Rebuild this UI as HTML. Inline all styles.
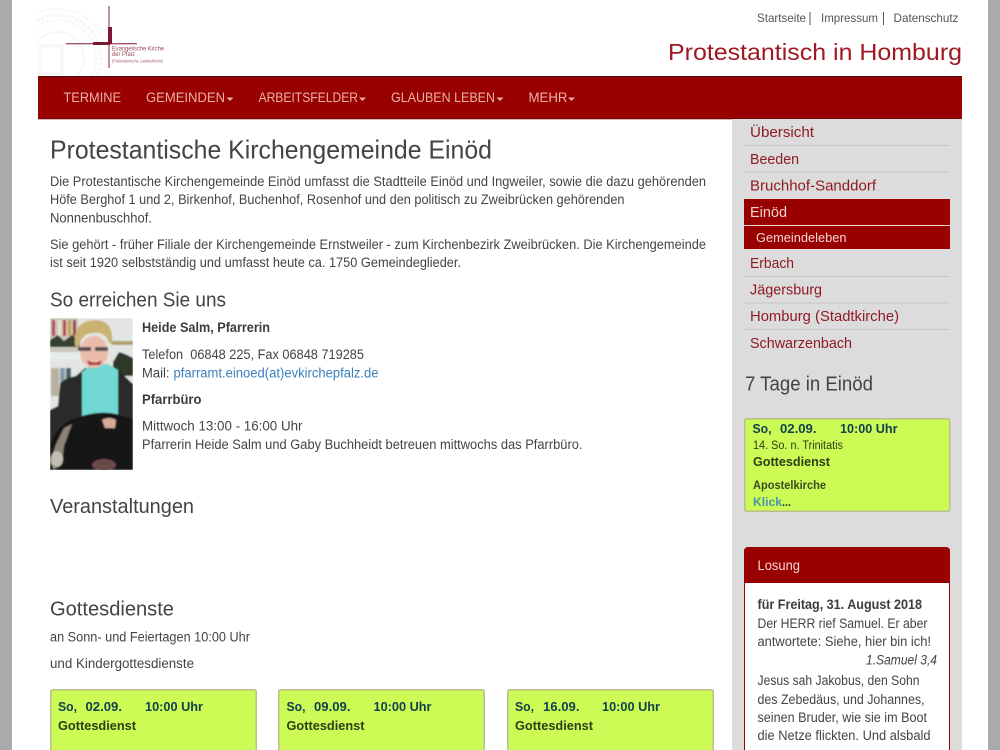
<!DOCTYPE html>
<html lang="de"><head><meta charset="utf-8"><title>Protestantische Kirchengemeinde Einöd</title>
<style>
html,body{margin:0;padding:0;width:1000px;height:750px;overflow:hidden;background:#aaa}
svg{display:block;position:absolute;left:0;top:0}
text{font-family:"Liberation Sans",sans-serif;fill:#444;font-size:13.5px}
.b{font-weight:bold;fill:#3c3c3c}
.side{fill:#8f1a24;font-size:15px}
.nav{fill:#ecb0a6;font-size:13.5px}
.top{fill:#555;font-size:12px}
.h2{font-size:20px}
.t{fill:#12404c;font-weight:bold;font-size:13px}
.g{fill:#2f3d18;font-weight:bold;font-size:13px}
</style></head><body>
<svg width="1000" height="750" viewBox="0 0 1000 750" xmlns="http://www.w3.org/2000/svg">
<defs>
<filter id="bl" x="-5%" y="-5%" width="110%" height="110%"><feGaussianBlur stdDeviation="0.7"/></filter>
<filter id="bs" x="-5%" y="-5%" width="110%" height="110%"><feGaussianBlur stdDeviation="0.35"/></filter>
<filter id="bt" x="-5%" y="-5%" width="110%" height="110%"><feGaussianBlur stdDeviation="0.3"/></filter>
<clipPath id="pc"><rect x="50" y="318" width="83" height="152"/></clipPath>
<clipPath id="sc"><rect x="36" y="8" width="80" height="68"/></clipPath>
</defs>
<rect x="12" y="0" width="976" height="750" fill="#fff"/>
<!-- logo -->
<g clip-path="url(#sc)" fill="none" stroke="#f7f7f7" filter="url(#bs)">
<circle cx="58" cy="58" r="49" stroke-width="1.500"/><circle cx="58" cy="58" r="38" stroke-width="1.500"/><circle cx="58" cy="58" r="43" stroke-width="4" stroke-dasharray="3 2"/><circle cx="58" cy="58" r="26" stroke-width="2"/><rect x="40" y="46" width="22" height="28" stroke-width="3"/>
</g>
<g filter="url(#bs)">
<rect x="108.400" y="6" width="1.200" height="62" fill="#a14a5c"/>
<rect x="66" y="43.200" width="71" height="1.100" fill="#8e2a40"/>
<rect x="108" y="27" width="4" height="17" fill="#7c1630"/>
<rect x="93" y="42" width="17" height="3" fill="#7c1630"/>
</g>
<g filter="url(#bt)">
<text x="112" y="50.500" textLength="52" lengthAdjust="spacingAndGlyphs" style="font-size:6.500px;fill:#9c4a5a">Evangelische Kirche</text>
<text x="112" y="55.800" textLength="23" lengthAdjust="spacingAndGlyphs" style="font-size:6.500px;fill:#9c4a5a">der Pfalz</text>
<text x="112" y="62.500" textLength="51" lengthAdjust="spacingAndGlyphs" style="font-size:4.500px;fill:#a5606c">(Protestantische Landeskirche)</text>
</g>
<!-- top links -->
<text class="top" x="757" y="22" textLength="49" lengthAdjust="spacingAndGlyphs">Startseite</text>
<rect x="809.500" y="12" width="1" height="13" fill="#555"/>
<text class="top" x="821" y="22" textLength="57" lengthAdjust="spacingAndGlyphs">Impressum</text>
<rect x="883" y="12" width="1" height="13" fill="#555"/>
<text class="top" x="893.500" y="22" textLength="65" lengthAdjust="spacingAndGlyphs">Datenschutz</text>
<text x="668" y="60" textLength="294" lengthAdjust="spacingAndGlyphs" style="font-size:23px;fill:#a01822">Protestantisch in Homburg</text>
<!-- nav -->
<rect x="38" y="76" width="924" height="43" fill="#990000"/>
<rect x="38" y="76" width="924" height="1" fill="#4d0a0a"/>
<rect x="38" y="118.500" width="924" height="0.800" fill="#5a0a0a"/>
<text class="nav" x="63.500" y="102" textLength="57.500" lengthAdjust="spacingAndGlyphs">TERMINE</text>
<text class="nav" x="146" y="102" textLength="79" lengthAdjust="spacingAndGlyphs">GEMEINDEN</text>
<path d="M226.500 97.500h7l-3.500 3.500z" fill="#ecb0a6"/>
<text class="nav" x="258.500" y="102" textLength="99.500" lengthAdjust="spacingAndGlyphs">ARBEITSFELDER</text>
<path d="M359 97.500h7l-3.500 3.500z" fill="#ecb0a6"/>
<text class="nav" x="391" y="102" textLength="104" lengthAdjust="spacingAndGlyphs">GLAUBEN LEBEN</text>
<path d="M496.500 97.500h7l-3.500 3.500z" fill="#ecb0a6"/>
<text class="nav" x="528.500" y="102" textLength="39" lengthAdjust="spacingAndGlyphs">MEHR</text>
<path d="M568 97.500h7l-3.500 3.500z" fill="#ecb0a6"/>
<!-- main -->
<text x="50" y="158.500" textLength="442" lengthAdjust="spacingAndGlyphs" style="font-size:26px">Protestantische Kirchengemeinde Einöd</text>
<text x="50" y="186" textLength="656" lengthAdjust="spacingAndGlyphs">Die Protestantische Kirchengemeinde Einöd umfasst die Stadtteile Einöd und Ingweiler, sowie die dazu gehörenden</text>
<text x="50" y="204" textLength="574.500" lengthAdjust="spacingAndGlyphs">Höfe Berghof 1 und 2, Birkenhof, Buchenhof, Rosenhof und den politisch zu Zweibrücken gehörenden</text>
<text x="50" y="222.500" textLength="102" lengthAdjust="spacingAndGlyphs">Nonnenbuschhof.</text>
<text x="50" y="249" textLength="656" lengthAdjust="spacingAndGlyphs">Sie gehört - früher Filiale der Kirchengemeinde Ernstweiler - zum Kirchenbezirk Zweibrücken. Die Kirchengemeinde</text>
<text x="50" y="267" textLength="411" lengthAdjust="spacingAndGlyphs">ist seit 1920 selbstständig und umfasst heute ca. 1750 Gemeindeglieder.</text>
<text class="h2" x="50" y="306.500" textLength="176" lengthAdjust="spacingAndGlyphs">So erreichen Sie uns</text>
<!-- photo -->
<g clip-path="url(#pc)"><g filter="url(#bl)">
<rect x="50" y="318" width="83" height="152" fill="#e2e5e2"/>
<rect x="50" y="318" width="28" height="34" fill="#c9c6ba"/>
<rect x="52" y="320" width="3" height="16" fill="#b8474a"/><rect x="58" y="320" width="3" height="16" fill="#e8e0d0"/><rect x="63" y="320" width="3" height="16" fill="#b8474a"/><rect x="68" y="320" width="3" height="16" fill="#c8a040"/><rect x="73" y="320" width="3" height="16" fill="#a03a4a"/>
<path d="M50 340l8-5 6 6 8-6 8 6v6H50z" fill="#36402e"/>
<rect x="50" y="352" width="30" height="8" fill="#e6ece8"/>
<rect x="51" y="368" width="8" height="28" fill="#b8b0a0"/><rect x="60" y="368" width="5" height="26" fill="#7f9aa8"/><rect x="66" y="368" width="5" height="14" fill="#48606a"/>
<rect x="112" y="341" width="21" height="4" fill="#aea068"/>
<path d="M113 362l6-10 6 2 8 4v18h-20z" fill="#2e3828"/>
<path d="M50 470V410l8-4 2-22q4-6 16-8l9-8 33 2 15 14v86z" fill="#2a2a2a"/>
<path d="M82 372l10-8 16 0 10 6v52H82z" fill="#72d8d4"/>
<ellipse cx="94" cy="352" rx="14" ry="16" fill="#ecbcab"/>
<path d="M75 346q-3-25 20-26 19 0 17 24l-3-1q-3-11-15-10-13 0-15 14z" fill="#c9b272"/>
<path d="M78 347h13v4H78zM95 347h13v4H95z" fill="#5c5050"/>
<path d="M87 360q8 5 15 0l-2 5h-11z" fill="#a8323f"/>
<path d="M50 470V445q8-22 26-27 22-8 40-4l17 5v51z" fill="#121212"/>
<path d="M102 420q7-4 14 0l-1 8h-10z" fill="#d8a898"/>
<path d="M50 462l6-18 8-16 8-4-8 22-2 16-8 8z" fill="#8c8474"/>
<ellipse cx="57" cy="459" rx="6" ry="8" fill="#c0beb2"/>
<ellipse cx="104" cy="465" rx="12" ry="6" fill="#6a4a4a"/>
</g></g>
<text class="b" x="142" y="332" textLength="128" lengthAdjust="spacingAndGlyphs">Heide Salm, Pfarrerin</text>
<text x="142" y="359" textLength="222" lengthAdjust="spacingAndGlyphs" xml:space="preserve">Telefon  06848 225, Fax 06848 719285</text>
<text x="142" y="377.500" textLength="27.500" lengthAdjust="spacingAndGlyphs">Mail:</text>
<text x="173.500" y="377.500" textLength="205" lengthAdjust="spacingAndGlyphs" style="fill:#3b7fbd">pfarramt.einoed(at)evkirchepfalz.de</text>
<text class="b" x="142" y="404" textLength="59.500" lengthAdjust="spacingAndGlyphs">Pfarrbüro</text>
<text x="142" y="430.500" textLength="160.500" lengthAdjust="spacingAndGlyphs">Mittwoch 13:00 - 16:00 Uhr</text>
<text x="142" y="449" textLength="440.500" lengthAdjust="spacingAndGlyphs">Pfarrerin Heide Salm und Gaby Buchheidt betreuen mittwochs das Pfarrbüro.</text>
<text class="h2" x="50" y="513" textLength="144" lengthAdjust="spacingAndGlyphs">Veranstaltungen</text>
<text class="h2" x="50" y="615.500" textLength="124" lengthAdjust="spacingAndGlyphs">Gottesdienste</text>
<text x="50" y="641.500" textLength="200" lengthAdjust="spacingAndGlyphs">an Sonn- und Feiertagen 10:00 Uhr</text>
<text x="50" y="668" textLength="144" lengthAdjust="spacingAndGlyphs">und Kindergottesdienste</text>
<!-- cards -->
<rect x="50.750" y="689.750" width="205.500" height="80" rx="2" fill="#ccfb55" stroke="#bdbd90" stroke-width="1.500"/>
<rect x="278.750" y="689.750" width="205.500" height="80" rx="2" fill="#ccfb55" stroke="#bdbd90" stroke-width="1.500"/>
<rect x="507.750" y="689.750" width="205.500" height="80" rx="2" fill="#ccfb55" stroke="#bdbd90" stroke-width="1.500"/>
<text class="t" x="58" y="711" textLength="19" lengthAdjust="spacingAndGlyphs">So,</text><text class="t" x="85.500" y="711" textLength="36.500" lengthAdjust="spacingAndGlyphs">02.09.</text><text class="t" x="145" y="711" textLength="58" lengthAdjust="spacingAndGlyphs">10:00 Uhr</text>
<text class="g" x="58" y="730" textLength="78" lengthAdjust="spacingAndGlyphs">Gottesdienst</text>
<text class="t" x="286.500" y="711" textLength="19" lengthAdjust="spacingAndGlyphs">So,</text><text class="t" x="314" y="711" textLength="36.500" lengthAdjust="spacingAndGlyphs">09.09.</text><text class="t" x="373.500" y="711" textLength="58" lengthAdjust="spacingAndGlyphs">10:00 Uhr</text>
<text class="g" x="286.500" y="730" textLength="78" lengthAdjust="spacingAndGlyphs">Gottesdienst</text>
<text class="t" x="515" y="711" textLength="19" lengthAdjust="spacingAndGlyphs">So,</text><text class="t" x="543" y="711" textLength="36.500" lengthAdjust="spacingAndGlyphs">16.09.</text><text class="t" x="602" y="711" textLength="58" lengthAdjust="spacingAndGlyphs">10:00 Uhr</text>
<text class="g" x="515" y="730" textLength="78" lengthAdjust="spacingAndGlyphs">Gottesdienst</text>
<!-- sidebar -->
<rect x="732" y="119" width="230" height="631" fill="#dcdcdc"/>
<g fill="#c6c6c6"><rect x="744" y="145" width="206" height="1"/><rect x="744" y="171.500" width="206" height="1"/><rect x="744" y="276" width="206" height="1"/><rect x="744" y="302.500" width="206" height="1"/><rect x="744" y="329" width="206" height="1"/></g>
<rect x="744" y="199" width="206" height="50" fill="#990000"/>
<rect x="744" y="225" width="206" height="1" fill="#f0d8d8"/>
<text class="side" x="750" y="137" textLength="64" lengthAdjust="spacingAndGlyphs">Übersicht</text>
<text class="side" x="750" y="164" textLength="49" lengthAdjust="spacingAndGlyphs">Beeden</text>
<text class="side" x="750" y="190.500" textLength="126" lengthAdjust="spacingAndGlyphs">Bruchhof-Sanddorf</text>
<text class="side" x="750" y="217" textLength="37" lengthAdjust="spacingAndGlyphs" style="fill:#f3d6d0">Einöd</text>
<text x="756" y="242" textLength="90.500" lengthAdjust="spacingAndGlyphs" style="font-size:13px;fill:#f3d6d0">Gemeindeleben</text>
<text class="side" x="750" y="268" textLength="44" lengthAdjust="spacingAndGlyphs">Erbach</text>
<text class="side" x="750" y="294.500" textLength="72" lengthAdjust="spacingAndGlyphs">Jägersburg</text>
<text class="side" x="750" y="321" textLength="149" lengthAdjust="spacingAndGlyphs">Homburg (Stadtkirche)</text>
<text class="side" x="750" y="348" textLength="102" lengthAdjust="spacingAndGlyphs">Schwarzenbach</text>
<text class="h2" x="745" y="390.500" textLength="128" lengthAdjust="spacingAndGlyphs">7 Tage in Einöd</text>
<rect x="744.750" y="418.750" width="205" height="92.500" rx="2" fill="#ccfb55" stroke="#bdbd90" stroke-width="1.500"/>
<text class="t" x="752.500" y="433" textLength="19" lengthAdjust="spacingAndGlyphs">So,</text><text class="t" x="780" y="433" textLength="36.500" lengthAdjust="spacingAndGlyphs">02.09.</text><text class="t" x="840" y="433" textLength="57.500" lengthAdjust="spacingAndGlyphs">10:00 Uhr</text>
<text x="753" y="449" textLength="90" lengthAdjust="spacingAndGlyphs" style="font-size:11.500px;fill:#2f3d18;font-weight:normal">14. So. n. Trinitatis</text>
<text class="g" x="753" y="466" textLength="77" lengthAdjust="spacingAndGlyphs">Gottesdienst</text>
<text x="753" y="489" textLength="73" lengthAdjust="spacingAndGlyphs" style="font-size:12px;font-weight:bold;fill:#3a4a22">Apostelkirche</text>
<text x="753" y="506" textLength="29" lengthAdjust="spacingAndGlyphs" style="font-size:12px;font-weight:bold;fill:#4a96a8">Klick</text>
<text x="782" y="506" textLength="9" lengthAdjust="spacingAndGlyphs" style="font-size:12px;font-weight:bold;fill:#2f3d18">...</text>
<!-- Losung -->
<rect x="744.500" y="547.500" width="205" height="230" rx="4" fill="#fff" stroke="#990000"/>
<path d="M744 583V551a4 4 0 0 1 4-4h198a4 4 0 0 1 4 4v32z" fill="#990000"/>
<text x="757.500" y="570" textLength="42.500" lengthAdjust="spacingAndGlyphs" style="fill:#f3d6d0">Losung</text>
<text class="b" x="757.500" y="609" textLength="164.500" lengthAdjust="spacingAndGlyphs">für Freitag, 31. August 2018</text>
<text x="757.500" y="628" textLength="170" lengthAdjust="spacingAndGlyphs">Der HERR rief Samuel. Er aber</text>
<text x="757.500" y="646" textLength="173.500" lengthAdjust="spacingAndGlyphs">antwortete: Siehe, hier bin ich!</text>
<text x="866" y="664.500" textLength="71" lengthAdjust="spacingAndGlyphs" style="font-style:italic">1.Samuel 3,4</text>
<text x="757.500" y="685" textLength="162" lengthAdjust="spacingAndGlyphs">Jesus sah Jakobus, den Sohn</text>
<text x="757.500" y="704" textLength="167" lengthAdjust="spacingAndGlyphs">des Zebedäus, und Johannes,</text>
<text x="757.500" y="722" textLength="169.500" lengthAdjust="spacingAndGlyphs">seinen Bruder, wie sie im Boot</text>
<text x="757.500" y="740" textLength="173" lengthAdjust="spacingAndGlyphs">die Netze flickten. Und alsbald</text>
</svg>
</body></html>
